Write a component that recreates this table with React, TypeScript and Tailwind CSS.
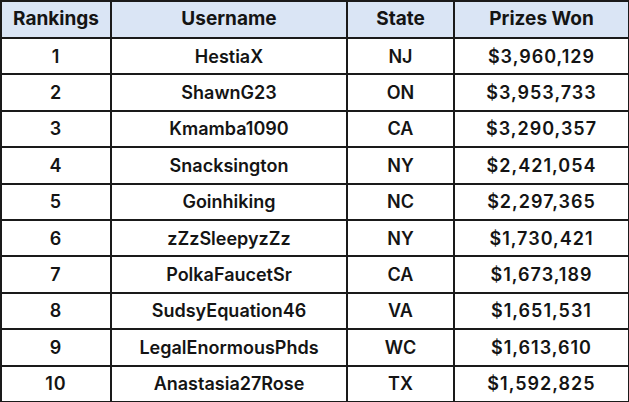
import React from 'react';

type Row = {
  rank: number;
  username: string;
  state: string;
  prizes: string;
};

const rows: Row[] = [
  { rank: 1, username: 'HestiaX', state: 'NJ', prizes: '$3,960,129' },
  { rank: 2, username: 'ShawnG23', state: 'ON', prizes: '$3,953,733' },
  { rank: 3, username: 'Kmamba1090', state: 'CA', prizes: '$3,290,357' },
  { rank: 4, username: 'Snacksington', state: 'NY', prizes: '$2,421,054' },
  { rank: 5, username: 'Goinhiking', state: 'NC', prizes: '$2,297,365' },
  { rank: 6, username: 'zZzSleepyzZz', state: 'NY', prizes: '$1,730,421' },
  { rank: 7, username: 'PolkaFaucetSr', state: 'CA', prizes: '$1,673,189' },
  { rank: 8, username: 'SudsyEquation46', state: 'VA', prizes: '$1,651,531' },
  { rank: 9, username: 'LegalEnormousPhds', state: 'WC', prizes: '$1,613,610' },
  { rank: 10, username: 'Anastasia27Rose', state: 'TX', prizes: '$1,592,825' },
];

export default function App() {
  return (
    <div className="w-[629px] h-[402px] bg-white font-['Inter',_'Liberation_Sans',_sans-serif] text-[#141414]">
      <table className="w-[628px] border-collapse table-fixed">
        <colgroup>
          <col className="w-[110px]" />
          <col className="w-[236px]" />
          <col className="w-[107px]" />
          <col className="w-[175px]" />
        </colgroup>
        <thead>
          <tr className="h-[37px] bg-[#dae5f5] text-[19px] font-bold">
            <th className="border-2 border-[#1a1a1a]">Rankings</th>
            <th className="border-2 border-[#1a1a1a]">Username</th>
            <th className="border-2 border-[#1a1a1a]">State</th>
            <th className="border-2 border-[#1a1a1a]">Prizes Won</th>
          </tr>
        </thead>
        <tbody>
          {rows.map((row) => (
            <tr className="h-[36.4px] text-[18px] font-semibold text-center" key={row.rank}>
              <td className="border-2 border-[#1a1a1a] tracking-[1px]">{row.rank}</td>
              <td className="border-2 border-[#1a1a1a]">{row.username}</td>
              <td className="border-2 border-[#1a1a1a]">{row.state}</td>
              <td className="border-2 border-[#1a1a1a] tracking-[1px]">{row.prizes}</td>
            </tr>
          ))}
        </tbody>
      </table>
    </div>
  );
}
